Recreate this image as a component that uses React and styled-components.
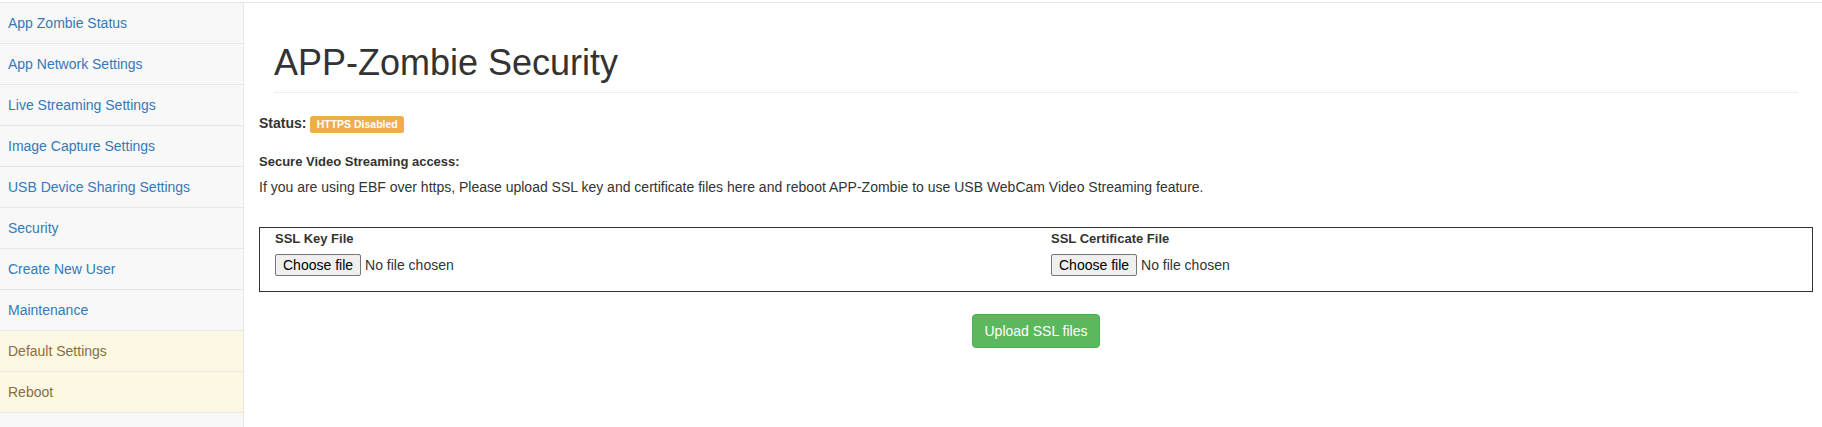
import React from 'react';
import styled, { createGlobalStyle } from 'styled-components';

const GlobalStyle = createGlobalStyle`
  html, body {
    margin: 0;
    padding: 0;
    background: #fff;
  }
  body {
    font-family: "Liberation Sans", Arial, Helvetica, sans-serif;
    font-size: 14px;
    line-height: 1.42857143;
    color: #333;
  }
  * {
    box-sizing: border-box;
  }
`;

const Page = styled.div`
  padding-top: 2px;
`;

const Layout = styled.div`
  display: flex;
  min-height: 425px;
  border-top: 1px solid #e7e7e7;
`;

const Sidebar = styled.nav`
  width: 244px;
  flex-shrink: 0;
  background: #f8f8f8;
  border-right: 1px solid #e7e7e7;
`;

const NavItem = styled.a`
  display: block;
  padding: 10px 8px;
  line-height: 20px;
  border-bottom: 1px solid #e7e7e7;
  text-decoration: none;
  color: ${(p) => (p.$warning ? '#8a6d3b' : '#337ab7')};
  background: ${(p) => (p.$warning ? '#fcf8e3' : 'transparent')};
  &:hover {
    text-decoration: underline;
  }
`;

const Main = styled.main`
  flex: 1;
  padding: 0 9px 0 15px;
`;

const PageHeader = styled.div`
  margin: 40px 15px 20px;
  padding-bottom: 9px;
  border-bottom: 1px solid #eee;
`;

const Title = styled.h1`
  margin: 0;
  font-size: 36px;
  font-weight: 500;
  line-height: 1.1;
  color: #333;
`;

const StatusLine = styled.p`
  margin: 0 0 20px;
  font-weight: bold;
`;

const Badge = styled.span`
  display: inline;
  padding: 0.2em 0.6em 0.3em;
  font-size: 75%;
  font-weight: bold;
  line-height: 1;
  color: #fff;
  white-space: nowrap;
  vertical-align: baseline;
  border-radius: 0.25em;
  background: ${(p) => p.$color || '#f0ad4e'};
`;

const FieldLabel = styled.label`
  display: block;
  font-size: 13px;
  font-weight: bold;
  padding-top: ${(p) => p.$offset || 0}px;
  margin-bottom: ${(p) => p.$gap || 6}px;
`;

const Text = styled.p`
  margin: 0 0 30px;
`;

const FileBox = styled.form`
  border: 1px solid #333;
  display: grid;
  grid-template-columns: 1fr 1fr;
`;

const FileColumn = styled.div`
  padding: 0 15px 15px;
`;

const FileRow = styled.label`
  display: flex;
  align-items: center;
  cursor: pointer;
  input {
    display: none;
  }
`;

const FileButton = styled.span`
  display: inline-block;
  height: 22px;
  padding: 2px 7px;
  font-size: 14px;
  line-height: 16px;
  color: #000;
  background: #efefef;
  border: 1px solid #767676;
  border-radius: 2px;
`;

const FileName = styled.span`
  margin-left: 4px;
  font-size: 14px;
  line-height: 16px;
  color: #333;
`;

const Actions = styled.div`
  display: flex;
  justify-content: center;
  margin-top: 22px;
`;

const Button = styled.button`
  display: inline-block;
  padding: 6px 12px;
  font-family: inherit;
  font-size: 14px;
  line-height: 20px;
  color: #fff;
  background: #5cb85c;
  border: 1px solid #4cae4c;
  border-radius: 4px;
  cursor: pointer;
  &:hover {
    background: #449d44;
  }
`;

const navItems = [
  { name: 'App Zombie Status' },
  { name: 'App Network Settings' },
  { name: 'Live Streaming Settings' },
  { name: 'Image Capture Settings' },
  { name: 'USB Device Sharing Settings' },
  { name: 'Security' },
  { name: 'Create New User' },
  { name: 'Maintenance' },
  { name: 'Default Settings', warning: true },
  { name: 'Reboot', warning: true },
];

const FilePicker = ({ label, name }) => (
  <FileColumn>
    <FieldLabel $offset={2} $gap={5}>{label}</FieldLabel>
    <FileRow>
      <input type="file" name={name} />
      <FileButton>Choose file</FileButton>
      <FileName>No file chosen</FileName>
    </FileRow>
  </FileColumn>
);

const App = () => {
  return (
    <Page>
      <GlobalStyle />
      <Layout>
        <Sidebar>
          {navItems.map((item) => (
            <NavItem key={item.name} href="#" $warning={item.warning}>
              {item.name}
            </NavItem>
          ))}
        </Sidebar>
        <Main>
          <PageHeader>
            <Title>APP-Zombie Security</Title>
          </PageHeader>
          <StatusLine>
            Status: <Badge>HTTPS Disabled</Badge>
          </StatusLine>
          <FieldLabel>Secure Video Streaming access:</FieldLabel>
          <Text>
            If you are using EBF over https, Please upload SSL key and certificate files here and reboot
            APP-Zombie to use USB WebCam Video Streaming feature.
          </Text>
          <FileBox onSubmit={(e) => e.preventDefault()}>
            <FilePicker label="SSL Key File" name="key" />
            <FilePicker label="SSL Certificate File" name="cert" />
          </FileBox>
          <Actions>
            <Button type="button">Upload SSL files</Button>
          </Actions>
        </Main>
      </Layout>
    </Page>
  );
};

export default App;
